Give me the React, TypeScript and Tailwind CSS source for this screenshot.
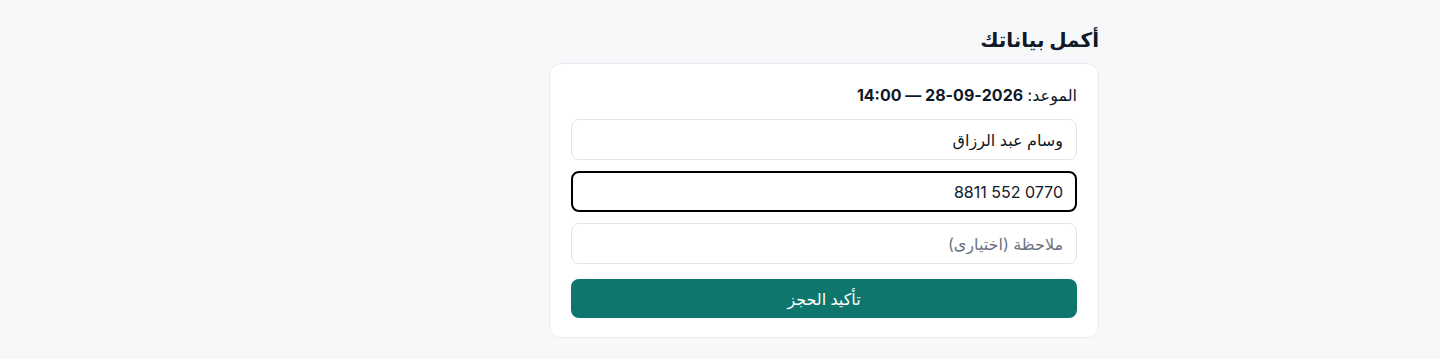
import React from 'react';

/**
 * Booking details form: name, phone, optional note and confirm button.
 */
export default function App() {
  return (
    <div
      dir="rtl"
      className="min-h-screen w-full bg-[#f7f8fa] text-[#111827]"
      style={{ fontFamily: 'Inter, "Noto Sans", "DejaVu Sans", sans-serif' }}
    >
      <div className="flex justify-start pt-[26px] pr-[341px]">
        <div className="w-[550px]">
          <h2 className="mb-[9px] text-[20px] font-bold leading-[28px]">أكمل بياناتك</h2>
          <form
            onSubmit={(e) => e.preventDefault()}
            className="rounded-xl border border-[#e8eaed] bg-white px-[21px] pt-[20px] pb-[19px]"
          >
            <p className="text-[16px] leading-[22px]">
              الموعد: <span className="font-bold">2026-09-28 — 14:00</span>
            </p>
            <input
              name="name"
              defaultValue="وسام عبد الرزاق"
              className="mt-[13px] block h-[41px] w-full rounded-lg border border-[#e2e4e8] px-[13px] text-[16px] outline-none"
            />
            <input
              name="phone"
              defaultValue="0770 552 8811"
              className="mt-[11px] block h-[41px] w-full rounded-lg border-2 border-black px-[12px] text-[16px] outline-none"
            />
            <input
              name="note"
              placeholder="ملاحظة (اختيارى)"
              className="mt-[11px] block h-[41px] w-full rounded-lg border border-[#e2e4e8] px-[13px] text-[16px] outline-none placeholder-[#6b7280]"
            />
            <button
              type="submit"
              className="mt-[15px] block h-[39px] w-full rounded-lg bg-[#0f766e] text-[16px] font-medium text-white"
            >
              تأكيد الحجز
            </button>
          </form>
        </div>
      </div>
    </div>
  );
}
